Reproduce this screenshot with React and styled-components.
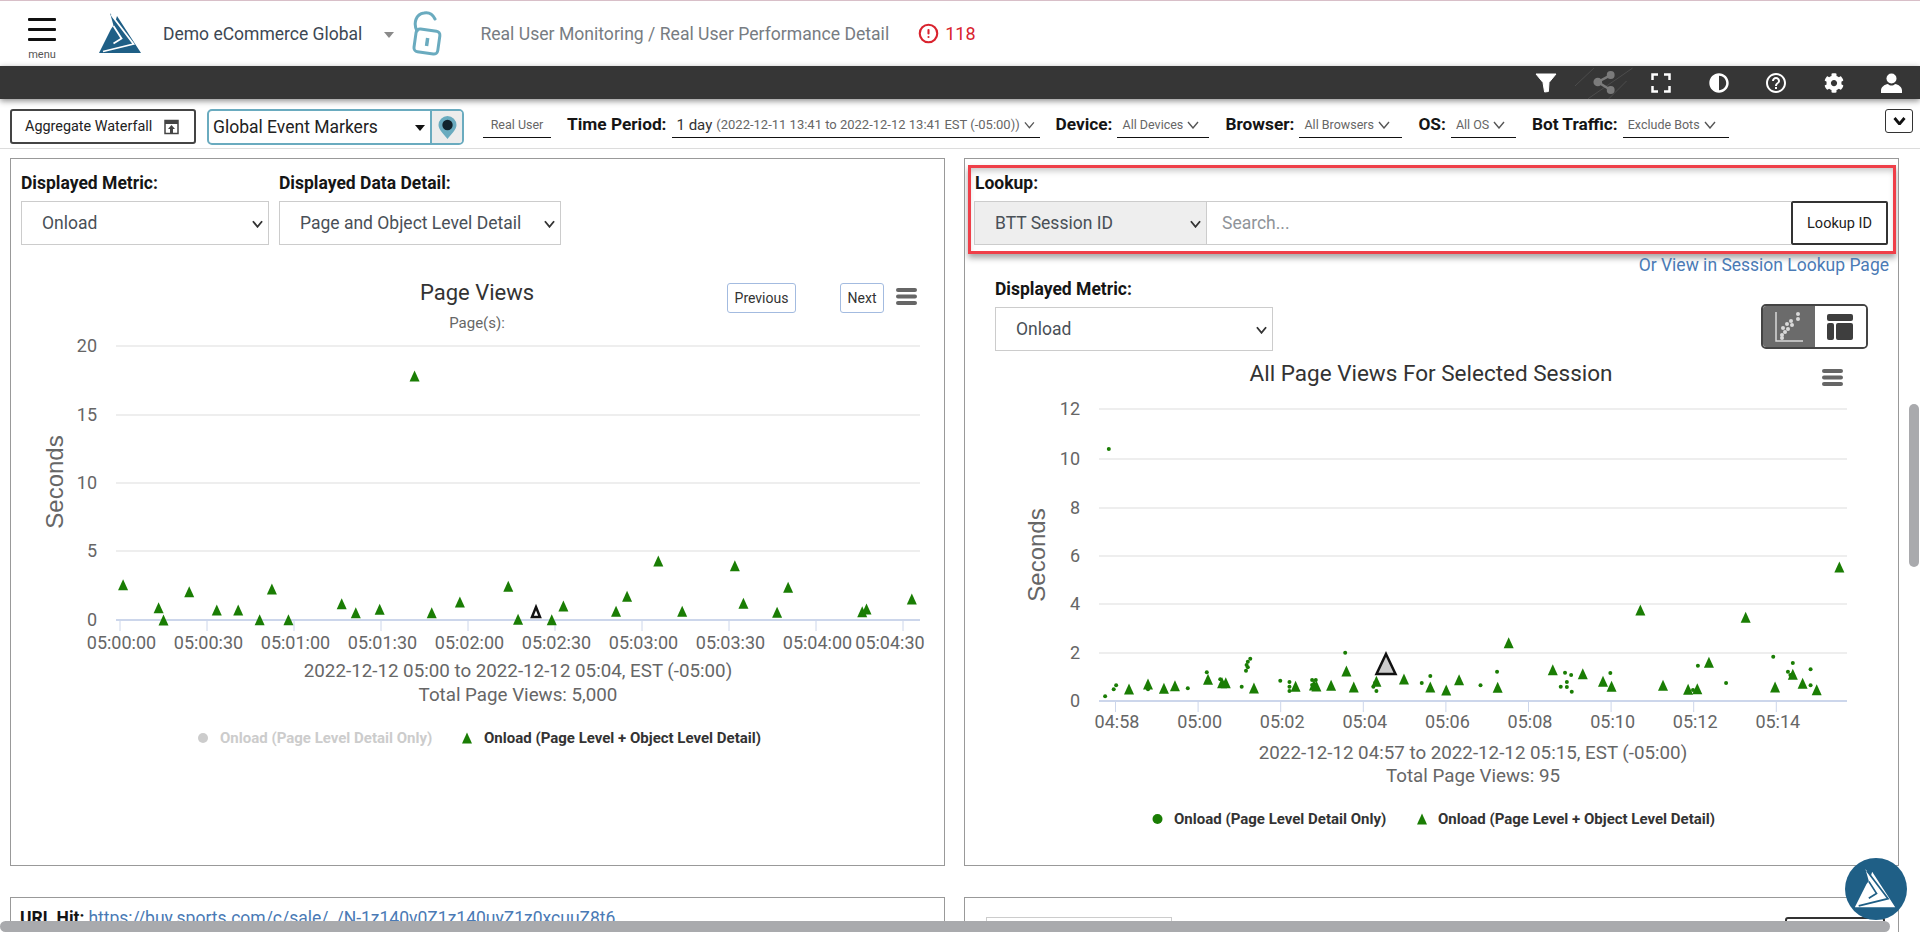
import React from 'react';
import styled, {createGlobalStyle} from 'styled-components';
import {CircleAlert} from 'lucide-react';
import {FaAdjust, FaCog} from 'react-icons/fa';
import {MdHelpOutline} from 'react-icons/md';

const GlobalStyle = createGlobalStyle`
  html, body {
    margin: 0;
    padding: 0;
    height: 100%;
    overflow: hidden;
    background: #fff;
    font-family: Roboto, "Liberation Sans", sans-serif;
  }
  * {
    box-sizing: border-box;
  }
`;

const Page = styled.div`
  position: relative;
  width: 1920px;
  height: 932px;
  overflow: hidden;
  border-top: 1px solid #d8bfc8;
`;

const Header = styled.header`
  display: flex;
  align-items: center;
  height: 65px;
`;
const MenuButton = styled.div`
  display: flex;
  flex-direction: column;
  align-items: center;
  width: 28px;
  margin-left: 28px;
  padding-top: 12px;
`;
const MenuBar = styled.span`
  display: block;
  width: 28px;
  height: 3px;
  margin-bottom: 7px;
  background: #111;
  border-radius: 1px;
`;
const MenuLabel = styled.span`
  font-size: 11px;
  line-height: 14px;
  color: #555;
`;
const LogoSlot = styled.div`
  display: flex;
  margin-left: 39px;
`;
const CompanyName = styled.span`
  margin-left: 16px;
  font-size: 17.5px;
  color: #3d4854;
`;
const Caret = styled.span`
  width: 0;
  height: 0;
  margin: 3px 0 0 22px;
  border-left: 5px solid transparent;
  border-right: 5px solid transparent;
  border-top: 6px solid #8a8a8a;
`;
const LockSlot = styled.div`
  display: flex;
  margin-left: 18px;
`;
const Breadcrumb = styled.span`
  margin-left: 38px;
  font-size: 17.6px;
  color: #777c82;
`;
const AlertCount = styled.div`
  display: flex;
  align-items: center;
  gap: 6px;
  margin-left: 29px;
  font-size: 18px;
  color: #d9232e;
`;

const DarkBar = styled.div`
  position: relative;
  display: flex;
  justify-content: flex-end;
  height: 33px;
  background: #363636;
  box-shadow: 0 2px 6px rgba(0, 0, 0, 0.45);
`;
const IconSlot = styled.div`
  display: flex;
  align-items: center;
  justify-content: center;
  width: 57.5px;
  color: #fff;
`;

const Toolbar = styled.div`
  display: flex;
  align-items: flex-start;
  height: 50px;
  padding: 10px 7px 0 10px;
  border-bottom: 1px solid #dcdcdc;
`;
const AggregateButton = styled.button`
  display: flex;
  align-items: center;
  gap: 12px;
  width: 186px;
  height: 35px;
  padding: 0 0 0 13px;
  border: 2px solid #444;
  border-radius: 3px;
  background: #fff;
  font: 400 14.4px Roboto, sans-serif;
  color: #222;
`;
const EventSelect = styled.div`
  display: flex;
  width: 257px;
  height: 36px;
  margin-left: 11px;
  border: 2px solid #6aabbf;
  border-radius: 5px;
  overflow: hidden;
`;
const EventValue = styled.div`
  display: flex;
  align-items: center;
  justify-content: space-between;
  flex: 1;
  padding: 0 5px 0 4px;
  font-size: 17.5px;
  color: #222;
`;
const EventCaret = styled.span`
  width: 0;
  height: 0;
  margin-top: 2px;
  border-left: 5px solid transparent;
  border-right: 5px solid transparent;
  border-top: 6px solid #111;
`;
const PinButton = styled.div`
  display: flex;
  align-items: center;
  justify-content: center;
  width: 32px;
  background: #ececec;
  border-left: 2px solid #6aabbf;
`;
const FilterGroup = styled.div`
  display: flex;
  align-items: center;
  gap: ${(p) => p.$gap || 16}px;
  height: 29px;
  margin-left: ${(p) => p.$gap || 16}px;
`;
const Filter = styled.div`
  display: flex;
  align-items: center;
  gap: 5px;
  height: 29px;
`;
const FilterLabel = styled.span`
  font-size: 17.3px;
  font-weight: 700;
  color: #151515;
`;
const Dropdown = styled.div`
  display: flex;
  align-items: center;
  justify-content: ${(p) => (p.$center ? 'center' : 'flex-start')};
  gap: 4px;
  width: ${(p) => p.$width}px;
  height: 29px;
  padding: 3px ${(p) => (p.$center ? 0 : 5)}px 0;
  border-bottom: 1.5px solid #111;
  font-size: 12.5px;
  color: #666;
  white-space: nowrap;
`;
const DropdownStrong = styled.span`
  font-size: 15px;
  color: #333;
`;
const DropdownRange = styled.span`
  font-size: 13px;
`;
const CollapseButton = styled.div`
  display: flex;
  align-items: center;
  justify-content: center;
  width: 28px;
  height: 24px;
  margin-left: auto;
  border: 1.5px solid #333;
  border-radius: 3px;
`;

const Content = styled.main`
  display: grid;
  grid-template-columns: 935px 935px;
  column-gap: 19px;
  row-gap: 31px;
  padding: 9px 0 0 10px;
`;
const Panel = styled.section`
  position: relative;
  height: ${(p) => p.$height}px;
  border: 1px solid #999;
  overflow: hidden;
`;
const ControlRow = styled.div`
  display: flex;
  gap: 10px;
  padding: 12px 0 0 10px;
`;
const Field = styled.div`
  display: flex;
  flex-direction: column;
  gap: 6px;
`;
const FieldLabel = styled.label`
  font-size: 17.5px;
  line-height: 24px;
  font-weight: 700;
  color: #151515;
`;
const SelectBox = styled.div`
  position: relative;
  width: ${(p) => p.$width}px;
  height: 44px;
  flex: none;
`;
const NativeSelect = styled.select`
  width: 100%;
  height: 100%;
  padding: 0 16px 0 20px;
  appearance: none;
  border: 1px solid #ccc;
  border-radius: 0;
  background: ${(p) => (p.$muted ? '#eee' : '#fff')};
  font: 400 17.5px Roboto, sans-serif;
  color: #495057;
`;
const SelectArrow = styled.span`
  position: absolute;
  right: 6px;
  top: 19px;
  display: flex;
  pointer-events: none;
`;
const ChartWrap = styled.div`
  position: relative;
`;
const ChartSvg = styled.svg`
  display: block;
`;
const PagerButton = styled.button`
  position: absolute;
  left: ${(p) => p.$left}px;
  top: 38px;
  width: ${(p) => p.$width}px;
  height: 30px;
  padding: 0;
  border: 1.5px solid #a3bbe0;
  border-radius: 3px;
  background: #fff;
  font: 400 14px Roboto, sans-serif;
  color: #333;
`;

const Highlight = styled.div`
  margin: 6px 2px 0 3px;
  padding: 3px 5px 6px 3px;
  border: 3px solid #ef3f49;
  box-shadow: 0 4px 6px rgba(0, 0, 0, 0.35), inset 0 5px 6px -2px rgba(0, 0, 0, 0.22);
`;
const LookupLabel = styled(FieldLabel)`
  display: block;
  margin: 0 0 6px 1px;
`;
const LookupRow = styled.div`
  display: flex;
`;
const SearchInput = styled.input`
  flex: 1;
  min-width: 0;
  height: 44px;
  padding: 0 15px;
  border: 1px solid #ccc;
  border-left: 0;
  border-right: 0;
  font: 400 17.5px Roboto, sans-serif;
  &::placeholder {
    color: #8f9499;
  }
`;
const LookupButton = styled.button`
  width: 97px;
  height: 44px;
  padding: 0;
  border: 2px solid #333;
  border-radius: 2px;
  background: #fff;
  font: 400 14.5px Roboto, sans-serif;
  color: #222;
`;
const SessionLink = styled.a`
  display: block;
  padding-right: 9px;
  font-size: 17.5px;
  line-height: 23px;
  text-align: right;
  color: #4a7ab5;
`;
const MetricRow = styled.div`
  display: flex;
  align-items: flex-end;
  justify-content: space-between;
  padding: 0 30px;
`;
const ViewToggle = styled.div`
  display: flex;
  width: 107px;
  height: 45px;
  margin-bottom: 2px;
  border: 2px solid #444;
  border-radius: 5px;
  overflow: hidden;
`;
const ToggleHalf = styled.div`
  display: flex;
  flex: 1;
  align-items: center;
  justify-content: center;
  background: ${(p) => (p.$active ? '#6b6b6b' : '#fff')};
`;

const UrlLine = styled.div`
  padding: 10px 9px 0;
  font-size: 17.5px;
  line-height: 20px;
  color: #151515;
`;
const UrlLabel = styled.strong`
  font-weight: 700;
  margin-right: 4px;
`;
const UrlLink = styled.a`
  color: #4a7ab5;
  text-decoration: underline;
`;
const BottomRow = styled.div`
  display: flex;
  justify-content: space-between;
  padding: 19px 13px 0 21px;
`;
const BottomInput = styled.div`
  width: 186px;
  height: 40px;
  border: 1px solid #ccc;
`;
const BottomButton = styled.div`
  width: 100px;
  height: 40px;
  border: 2px solid #333;
  border-radius: 3px;
`;

const HorizontalThumb = styled.div`
  position: absolute;
  left: 0;
  bottom: 0;
  width: 1890px;
  height: 11px;
  border-radius: 6px;
  background: #a9aaad;
`;
const VerticalThumb = styled.div`
  position: absolute;
  right: 1px;
  top: 403px;
  width: 10px;
  height: 163px;
  border-radius: 6px;
  background: #a9aaad;
`;
const HelpBubble = styled.div`
  position: absolute;
  left: 1845px;
  top: 857px;
  display: flex;
  align-items: center;
  justify-content: center;
  width: 62px;
  height: 62px;
  border-radius: 50%;
  background: #1f5f86;
`;

const AxisLabel = styled.text`
  font-size: 18px;
  fill: #666;
  text-anchor: ${(p) => p.$anchor || 'middle'};
`;
const ChartCaption = styled.text`
  font-size: 18.75px;
  fill: #666;
  text-anchor: middle;
`;
const AxisTitle = styled.text`
  font-family: "Liberation Sans", Arial, sans-serif;
  font-size: 24px;
  fill: #666;
  text-anchor: middle;
`;
const ChartTitle = styled.text`
  font-size: ${(p) => p.$size || 22}px;
  fill: #333;
  text-anchor: middle;
`;
const ChartNote = styled.text`
  font-size: 15px;
  fill: #666;
  text-anchor: middle;
`;
const LegendText = styled.text`
  font-size: 15px;
  font-weight: 700;
  fill: ${(p) => (p.$off ? '#ccc' : '#333')};
`;

const GREEN = '#1a7d04';

const leftPoints = [
  [201, 314], [259, 383], [267, 420], [309, 335], [354, 390], [389, 390], [424, 419], [444, 327],
  [471, 419], [558, 371], [581, 398], [620, 388], [705, 398], [751, 366], [830, 319], [846, 418],
  [901, 419], [920, 378], [1006, 394], [1024, 349], [1075, 243], [1114, 394], [1200, 257], [1214, 370],
  [1269, 397], [1287, 322], [1408, 395], [1415, 387], [1489, 357], [677, -312],
];
const rightTriangles = [
  [276, 627], [307, 612], [333, 625], [351, 617], [405, 598], [428, 608], [434, 608], [480, 624],
  [548, 619], [578, 615], [582, 618], [606, 616], [631, 573], [643, 621], [680, 604], [725, 597],
  [768, 621], [794, 630], [815, 599], [878, 622], [896, 488], [968, 569], [1017, 581], [1050, 604],
  [1064, 619], [1111, 390], [1148, 616], [1189, 628], [1204, 626], [1223, 547], [1283, 412], [1331, 621],
  [1360, 583], [1376, 610], [1399, 629], [1436, 261],
];
const rightDots = [
  [237, 649], [251, 628], [255, 616], [307, 628], [372, 625], [403, 577], [425, 598], [460, 620],
  [467, 572], [468, 555], [470, 562], [474, 536], [470, 545], [523, 602], [538, 606], [538, 620],
  [538, 633], [575, 600], [575, 615], [581, 600], [581, 626], [629, 518], [675, 620], [680, 633],
  [678, 608], [754, 609], [768, 588], [850, 616], [877, 575], [988, 578], [998, 585], [991, 606],
  [981, 620], [991, 621], [999, 635], [1062, 579], [1205, 557], [1197, 630], [1251, 609], [1328, 530],
  [1360, 549], [1352, 575], [1356, 585], [1389, 568], [1389, 616], [243, -93],
];

const leftX = (x) => x / 1.633;
const rightX = (x) => 960 + x / 1.633;
const plotY = (y) => 480 + y / 3;

function Triangle({x, y, w = 10, h = 11, fill = GREEN, stroke}) {
  return (
    <polygon
      points={`${x},${y - h / 2} ${x + w / 2},${y + h / 2} ${x - w / 2},${y + h / 2}`}
      fill={fill}
      stroke={stroke}
      strokeWidth={stroke ? 2.5 : 0}
    />
  );
}

function MenuGlyph({x, y}) {
  return (
    <g fill="#666">
      <rect x={x} y={y} width="21" height="4" rx="2" />
      <rect x={x} y={y + 6.5} width="21" height="4" rx="2" />
      <rect x={x} y={y + 13} width="21" height="4" rx="2" />
    </g>
  );
}

function Grid({lines, from, to}) {
  return lines.map((y) => <line key={y} x1={from} x2={to} y1={y} y2={y} stroke="#e8e8e8" strokeWidth="1.5" />);
}

function Axis({y, from, to, ticks}) {
  return (
    <g stroke="#ccd6eb">
      <line x1={from} x2={to} y1={y} y2={y} strokeWidth="2" />
      {ticks.map((x) => (
        <line key={x} x1={x} x2={x} y1={y} y2={y + 11} strokeWidth="1" />
      ))}
    </g>
  );
}

const leftTicks = ['05:00:00', '05:00:30', '05:01:00', '05:01:30', '05:02:00', '05:02:30', '05:03:00', '05:03:30', '05:04:00', '05:04:30'];
const rightTicks = ['04:58', '05:00', '05:02', '05:04', '05:06', '05:08', '05:10', '05:12', '05:14'];

function PageViewsChart() {
  return (
    <ChartSvg width="933" height="619" viewBox="11 245 933 619">
      <ChartTitle x="477" y="300">Page Views</ChartTitle>
      <ChartNote x="477" y="328">Page(s):</ChartNote>
      <MenuGlyph x={896} y={288} />
      <Grid lines={[346, 415, 483, 551]} from={116} to={920} />
      <Axis y={620} from={116} to={920} ticks={leftTicks.map((_, i) => 120 + i * 87)} />
      {[[20, 346], [15, 415], [10, 483], [5, 551], [0, 620]].map(([label, y]) => (
        <AxisLabel key={label} x="97" y={y + 6} $anchor="end">{label}</AxisLabel>
      ))}
      {leftTicks.map((label, i) => (
        <AxisLabel key={label} x={121.5 + i * 87 - (i === 9 ? 14.5 : 0)} y="649">{label}</AxisLabel>
      ))}
      <AxisTitle x="0" y="0" transform="translate(63 482) rotate(-90)">Seconds</AxisTitle>
      {leftPoints.map(([x, y]) => (
        <Triangle key={`${x}-${y}`} x={leftX(x)} y={plotY(y)} />
      ))}
      <Triangle x={536} y={612} w={8} h={10} fill="#fff" stroke="#111" />
      <ChartCaption x="518" y="677">2022-12-12 05:00 to 2022-12-12 05:04, EST (-05:00)</ChartCaption>
      <ChartCaption x="518" y="701">Total Page Views: 5,000</ChartCaption>
      <circle cx="203" cy="738" r="5" fill="#ccc" />
      <LegendText x="220" y="743" $off>Onload (Page Level Detail Only)</LegendText>
      <Triangle x={467} y={738} />
      <LegendText x="484" y="743">Onload (Page Level + Object Level Detail)</LegendText>
    </ChartSvg>
  );
}

function SessionChart() {
  return (
    <ChartSvg width="934" height="514" viewBox="965 351 934 514">
      <ChartTitle x="1431" y="381" $size={22.5}>All Page Views For Selected Session</ChartTitle>
      <MenuGlyph x={1822} y={369} />
      <Grid lines={[409, 459, 508, 556, 604, 653]} from={1099} to={1847} />
      <Axis y={701} from={1099} to={1847} ticks={rightTicks.map((_, i) => 1115.5 + i * 82.6)} />
      {[[12, 409], [10, 459], [8, 508], [6, 556], [4, 604], [2, 653], [0, 701]].map(([label, y]) => (
        <AxisLabel key={label} x="1080" y={y + 6} $anchor="end">{label}</AxisLabel>
      ))}
      {rightTicks.map((label, i) => (
        <AxisLabel key={label} x={1117 + i * 82.6} y="728">{label}</AxisLabel>
      ))}
      <AxisTitle x="0" y="0" transform="translate(1045 555) rotate(-90)">Seconds</AxisTitle>
      {rightDots.map(([x, y]) => (
        <circle key={`${x}-${y}`} cx={rightX(x)} cy={plotY(y)} r="2" fill={GREEN} />
      ))}
      {rightTriangles.map(([x, y]) => (
        <Triangle key={`${x}-${y}`} x={rightX(x)} y={plotY(y)} />
      ))}
      <Triangle x={1386} y={664} w={19} h={20} fill="#ccc" stroke="#111" />
      <ChartCaption x="1473" y="759">2022-12-12 04:57 to 2022-12-12 05:15, EST (-05:00)</ChartCaption>
      <ChartCaption x="1473" y="782">Total Page Views: 95</ChartCaption>
      <circle cx="1157.5" cy="819" r="5" fill={GREEN} />
      <LegendText x="1174" y="824">Onload (Page Level Detail Only)</LegendText>
      <Triangle x={1422} y={819} />
      <LegendText x="1438" y="824">Onload (Page Level + Object Level Detail)</LegendText>
    </ChartSvg>
  );
}

function Logo({size, main, cut}) {
  return (
    <svg width={size} height={size * (48 / 52)} viewBox="0 0 52 48">
      <path d="M15 3L20.5 11L22 6L46 43L4 43L16 19L18.5 15.5Z" fill={main} />
      <path d="M16.5 5L38.5 34L8 41.5" fill="none" stroke={cut} strokeWidth="1.8" />
      <path d="M18.5 16L26.5 28.5L18.5 33.5" fill="none" stroke={cut} strokeWidth="1.8" />
    </svg>
  );
}

function LockGlyph() {
  return (
    <svg width="30" height="46" viewBox="0 0 30 46" fill="none" stroke="#6aabbf" strokeWidth="3">
      <rect x="3" y="19" width="24" height="23" rx="4" transform="rotate(8 15 30)" />
      <path d="M5 20C1 12 4 3 12 2C17 1 21 4 23 8" strokeLinecap="round" />
      <rect x="13.5" y="27" width="3.5" height="8" fill="#6aabbf" stroke="none" transform="rotate(8 15 30)" />
    </svg>
  );
}

function FilterIcon() {
  return (
    <svg width="22" height="20" viewBox="0 0 22 20" fill="#fff">
      <path d="M1 1H21L14 9.5L13.4 18.5L9.6 19L8 9.5Z" stroke="#fff" strokeLinejoin="round" />
    </svg>
  );
}

function ShareIcon() {
  return (
    <svg width="58" height="33" viewBox="0 0 58 33">
      <g stroke="#4d4d4d" strokeWidth="1">
        <line x1="0" y1="20" x2="19" y2="2" />
        <line x1="13" y1="33" x2="58" y2="2" />
        <line x1="34" y1="33" x2="52" y2="15" />
      </g>
      <g fill="#7b7b7b">
        <circle cx="36" cy="9" r="4" />
        <circle cx="23" cy="16" r="4.4" />
        <circle cx="36" cy="24" r="4" />
      </g>
      <path d="M36 9L23 16L36 24" stroke="#7b7b7b" strokeWidth="2.5" fill="none" />
    </svg>
  );
}

function FullscreenIcon() {
  return (
    <svg width="20" height="20" viewBox="0 0 20 20" fill="none" stroke="#fff" strokeWidth="2.5">
      <path d="M1.5 7V1.5H7M13 1.5H18.5V7M18.5 13V18.5H13M7 18.5H1.5V13" />
    </svg>
  );
}

function UserIcon() {
  return (
    <svg width="21" height="20" viewBox="0 0 21 20" fill="#fff">
      <circle cx="10.5" cy="5.5" r="5" />
      <path d="M0 20V17.5C0 14 3.5 11.5 7 11C9 13 12 13 14 11C17.5 11.5 21 14 21 17.5V20Z" />
    </svg>
  );
}

function WaterfallIcon() {
  return (
    <svg width="15" height="16" viewBox="0 0 15 16">
      <path d="M1 1.5H14V14.5H1Z" fill="none" stroke="#444" strokeWidth="1.5" />
      <rect x="1" y="1" width="13" height="4" fill="#444" />
      <path d="M7.5 6L11 10H9V14H6V10H4Z" fill="#444" />
    </svg>
  );
}

function PinIcon() {
  return (
    <svg width="19" height="23" viewBox="0 0 19 23">
      <path d="M9.5 23C6 18 .5 14 .5 9A9 9 0 0 1 18.5 9C18.5 14 13 18 9.5 23Z" fill="#6aabbf" />
      <circle cx="9.5" cy="9" r="5.2" fill="#12232c" />
    </svg>
  );
}

function Chevron({color = '#555', width = 12, weight = 1.4}) {
  return (
    <svg width={width} height="8" viewBox="0 0 12 8" fill="none" stroke={color} strokeWidth={weight}>
      <path d="M1 1L6 7L11 1" />
    </svg>
  );
}

function Select({width, muted, value}) {
  return (
    <SelectBox $width={width}>
      <NativeSelect $muted={muted} defaultValue={value}>
        <option>{value}</option>
      </NativeSelect>
      <SelectArrow>
        <Chevron color="#333" width={11} weight={2} />
      </SelectArrow>
    </SelectBox>
  );
}

function ScatterIcon() {
  return (
    <svg width="30" height="32" viewBox="0 0 30 32" fill="#d9d9d9">
      <path d="M2 1V30H29" fill="none" stroke="#d9d9d9" strokeWidth="1.5" />
      {[[8, 24], [11, 21], [9, 17], [14, 18], [13, 13], [18, 14], [17, 10], [24, 8], [24, 3], [8, 27]].map(([cx, cy]) => (
        <circle key={`${cx}-${cy}`} cx={cx} cy={cy} r="2" />
      ))}
    </svg>
  );
}

function TableIcon() {
  return (
    <svg width="26" height="26" viewBox="0 0 26 26" fill="#3e3e3e">
      <rect x="0" y="0" width="26" height="7" rx="2" />
      <rect x="0" y="9" width="7" height="17" rx="2" />
      <rect x="9" y="9" width="17" height="17" rx="2" />
    </svg>
  );
}

export default function App() {
  return (
    <Page>
      <GlobalStyle />
      <Header>
        <MenuButton>
          <MenuBar />
          <MenuBar />
          <MenuBar />
          <MenuLabel>menu</MenuLabel>
        </MenuButton>
        <LogoSlot>
          <Logo size={52} main="#1f5f86" cut="#fff" />
        </LogoSlot>
        <CompanyName>Demo eCommerce Global</CompanyName>
        <Caret />
        <LockSlot>
          <LockGlyph />
        </LockSlot>
        <Breadcrumb>Real User Monitoring / Real User Performance Detail</Breadcrumb>
        <AlertCount>
          <CircleAlert size={21} strokeWidth={2.4} />
          118
        </AlertCount>
      </Header>

      <DarkBar>
        <IconSlot><FilterIcon /></IconSlot>
        <IconSlot><ShareIcon /></IconSlot>
        <IconSlot><FullscreenIcon /></IconSlot>
        <IconSlot><FaAdjust size={20} /></IconSlot>
        <IconSlot><MdHelpOutline size={24} /></IconSlot>
        <IconSlot><FaCog size={20} /></IconSlot>
        <IconSlot><UserIcon /></IconSlot>
      </DarkBar>

      <Toolbar>
        <AggregateButton>
          Aggregate Waterfall
          <WaterfallIcon />
        </AggregateButton>
        <EventSelect>
          <EventValue>
            Global Event Markers
            <EventCaret />
          </EventValue>
          <PinButton>
            <PinIcon />
          </PinButton>
        </EventSelect>
        <FilterGroup $gap={19}>
          <Dropdown $width={68} $center>Real User</Dropdown>
        </FilterGroup>
        <FilterGroup>
          <Filter>
            <FilterLabel>Time Period:</FilterLabel>
            <Dropdown $width={368}>
              <DropdownStrong>1 day</DropdownStrong>
              <DropdownRange>(2022-12-11 13:41 to 2022-12-12 13:41 EST (-05:00))</DropdownRange>
              <Chevron />
            </Dropdown>
          </Filter>
          <Filter>
            <FilterLabel>Device:</FilterLabel>
            <Dropdown $width={92}>All Devices <Chevron /></Dropdown>
          </Filter>
          <Filter>
            <FilterLabel>Browser:</FilterLabel>
            <Dropdown $width={103}>All Browsers <Chevron /></Dropdown>
          </Filter>
          <Filter>
            <FilterLabel>OS:</FilterLabel>
            <Dropdown $width={65}>All OS <Chevron /></Dropdown>
          </Filter>
          <Filter>
            <FilterLabel>Bot Traffic:</FilterLabel>
            <Dropdown $width={106}>Exclude Bots <Chevron /></Dropdown>
          </Filter>
        </FilterGroup>
        <CollapseButton>
          <Chevron color="#111" width={13} weight={2.8} />
        </CollapseButton>
      </Toolbar>

      <Content>
        <Panel $height={708}>
          <ControlRow>
            <Field>
              <FieldLabel>Displayed Metric:</FieldLabel>
              <Select width={248} value="Onload" />
            </Field>
            <Field>
              <FieldLabel>Displayed Data Detail:</FieldLabel>
              <Select width={282} value="Page and Object Level Detail" />
            </Field>
          </ControlRow>
          <ChartWrap>
            <PagerButton $left={716} $width={69}>Previous</PagerButton>
            <PagerButton $left={829} $width={44}>Next</PagerButton>
            <PageViewsChart />
          </ChartWrap>
        </Panel>

        <Panel $height={708}>
          <Highlight>
            <LookupLabel>Lookup:</LookupLabel>
            <LookupRow>
              <Select width={233} muted value="BTT Session ID" />
              <SearchInput placeholder="Search..." />
              <LookupButton>Lookup ID</LookupButton>
            </LookupRow>
          </Highlight>
          <SessionLink>Or View in Session Lookup Page</SessionLink>
          <MetricRow>
            <Field>
              <FieldLabel>Displayed Metric:</FieldLabel>
              <Select width={278} value="Onload" />
            </Field>
            <ViewToggle>
              <ToggleHalf $active><ScatterIcon /></ToggleHalf>
              <ToggleHalf><TableIcon /></ToggleHalf>
            </ViewToggle>
          </MetricRow>
          <SessionChart />
        </Panel>

        <Panel $height={120}>
          <UrlLine>
            <UrlLabel>URL Hit:</UrlLabel>
            <UrlLink>https://buy.sports.com/c/sale/_/N-1z140v0Z1z140uyZ1z0xcuuZ8t6</UrlLink>
          </UrlLine>
        </Panel>
        <Panel $height={120}>
          <BottomRow>
            <BottomInput />
            <BottomButton />
          </BottomRow>
        </Panel>
      </Content>

      <VerticalThumb />
      <HorizontalThumb />
      <HelpBubble>
        <Logo size={50} main="#fff" cut="#1f5f86" />
      </HelpBubble>
    </Page>
  );
}
